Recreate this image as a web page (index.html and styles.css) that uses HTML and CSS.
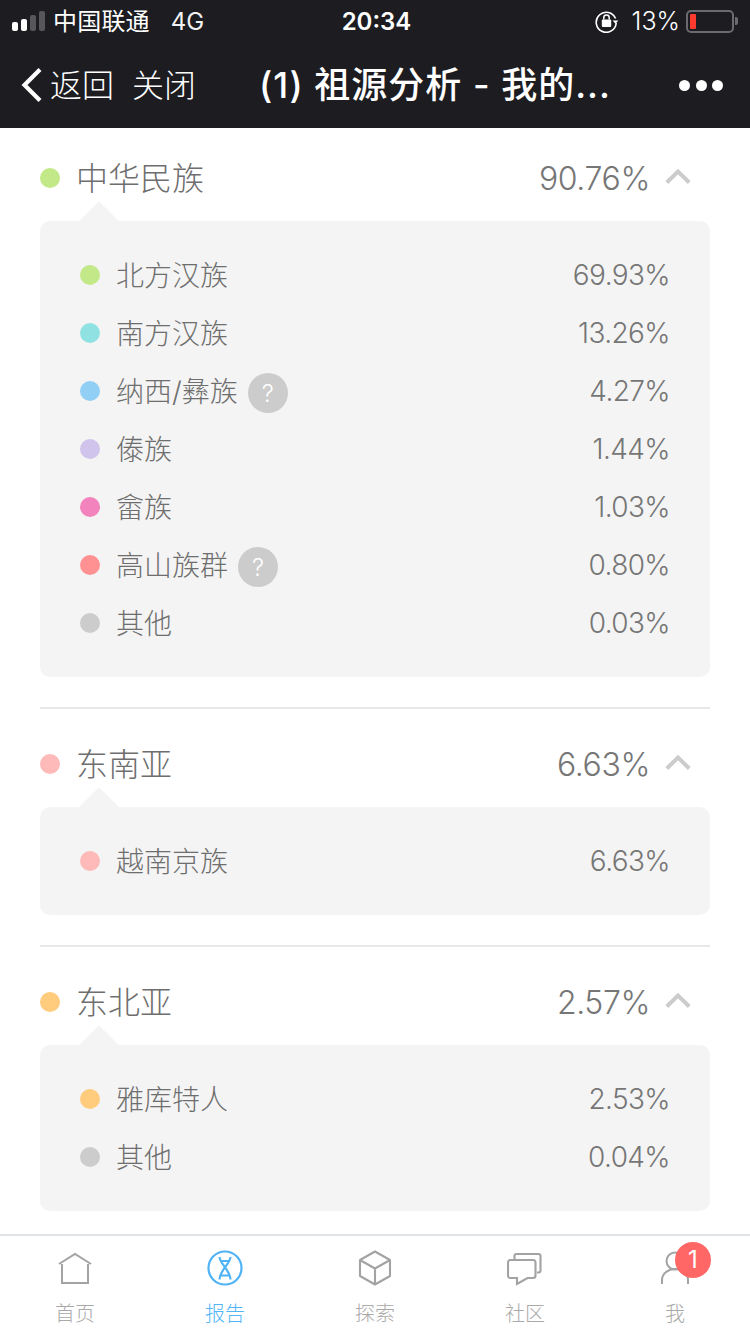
FILE: index.html
```html
<!DOCTYPE html>
<html lang="zh">
<head>
<meta charset="utf-8">
<title>祖源分析</title>
<link rel="stylesheet" href="styles.css">
</head>
<body>
<div class="app">
  <header class="top">
    <div class="status">
      <div class="status-left">
        <div class="signal"><i class="on s1"></i><i class="on s2"></i><i class="s3"></i><i class="s4"></i></div>
        <span class="carrier">中国联通</span>
        <span class="net">4G</span>
      </div>
      <div class="clock">20:34</div>
      <div class="status-right">
        <svg class="lock" viewBox="0 0 24 24" width="24" height="24"><path d="M20.5 9.5A10 10 0 1 0 21.2 14" fill="none" stroke="#fff" stroke-width="1.6"/><path d="M17.6 11.5h5.8l-2.9 3.2z" fill="#fff"/><rect x="6.8" y="10.5" width="9.4" height="7.5" rx="1" fill="#fff"/><path d="M8.8 10.5V8.600a2.700 2.700 0 0 1 5.400 0v1.900" fill="none" stroke="#fff" stroke-width="1.5"/></svg>
        <span class="pct">13%</span>
        <div class="battery"><div class="battery-body"><i class="battery-level"></i></div><i class="battery-tip"></i></div>
      </div>
    </div>
    <nav class="nav">
      <svg class="back" viewBox="0 0 24 36" width="24" height="36"><path d="M20 2.500 4.500 18 20 33.500" fill="none" stroke="#fff" stroke-width="4.200"/></svg>
      <span class="nav-link back-text">返回</span>
      <span class="nav-link close">关闭</span>
      <h1 class="title">(1) 祖源分析 - 我的...</h1>
      <div class="more"><i></i><i></i><i></i></div>
    </nav>
  </header>

  <main class="content">
    <section class="group first">
      <div class="group-head">
        <i class="dot green"></i><span class="group-name">中华民族</span>
        <span class="group-pct">90.76%</span>
        <svg class="chev" viewBox="0 0 26 16" width="26" height="16"><path d="M1.800 14.500 13 3.500l11.200 11" fill="none" stroke="#ccc" stroke-width="4"/></svg>
      </div>
      <div class="panel">
        <div class="row"><i class="dot green"></i><span class="name">北方汉族</span><span class="val">69.93%</span></div>
        <div class="row"><i class="dot teal"></i><span class="name">南方汉族</span><span class="val">13.26%</span></div>
        <div class="row"><i class="dot blue"></i><span class="name">纳西/彝族</span><span class="help">?</span><span class="val">4.27%</span></div>
        <div class="row"><i class="dot lilac"></i><span class="name">傣族</span><span class="val">1.44%</span></div>
        <div class="row"><i class="dot pink"></i><span class="name">畲族</span><span class="val">1.03%</span></div>
        <div class="row"><i class="dot red"></i><span class="name">高山族群</span><span class="help">?</span><span class="val">0.80%</span></div>
        <div class="row"><i class="dot grey"></i><span class="name">其他</span><span class="val">0.03%</span></div>
      </div>
    </section>

    <section class="group">
      <div class="group-head">
        <i class="dot salmon"></i><span class="group-name">东南亚</span>
        <span class="group-pct">6.63%</span>
        <svg class="chev" viewBox="0 0 26 16" width="26" height="16"><path d="M1.800 14.500 13 3.500l11.200 11" fill="none" stroke="#ccc" stroke-width="4"/></svg>
      </div>
      <div class="panel">
        <div class="row"><i class="dot salmon"></i><span class="name">越南京族</span><span class="val">6.63%</span></div>
      </div>
    </section>

    <section class="group">
      <div class="group-head">
        <i class="dot orange"></i><span class="group-name">东北亚</span>
        <span class="group-pct">2.57%</span>
        <svg class="chev" viewBox="0 0 26 16" width="26" height="16"><path d="M1.800 14.500 13 3.500l11.200 11" fill="none" stroke="#ccc" stroke-width="4"/></svg>
      </div>
      <div class="panel">
        <div class="row"><i class="dot orange"></i><span class="name">雅库特人</span><span class="val">2.53%</span></div>
        <div class="row"><i class="dot grey"></i><span class="name">其他</span><span class="val">0.04%</span></div>
      </div>
    </section>
  </main>

  <footer class="tabs">
    <div class="tab">
      <svg viewBox="0 0 36 36" width="36" height="36"><path d="M2 14 18 4l16 10" fill="none" stroke="#a3a3a3" stroke-width="2"/><path d="M5 14v19h26V14" fill="none" stroke="#a3a3a3" stroke-width="2"/></svg>
      <span>首页</span>
    </div>
    <div class="tab active">
      <svg viewBox="0 0 36 36" width="36" height="36"><circle cx="18" cy="18" r="16.500" fill="none" stroke="#4fb3f6" stroke-width="2.200"/><path d="M12.500 7C13 14 23 20 23.500 29.500M23.500 7C23 14 13 20 12.500 29.500M13 11h10M13 25.500h10" fill="none" stroke="#4fb3f6" stroke-width="2.200"/></svg>
      <span>报告</span>
    </div>
    <div class="tab">
      <svg viewBox="0 0 36 36" width="36" height="36"><path d="M18 1.500 33 10v16l-15 8.500L3 26V10zM3 10l15 8.500L33 10M18 18.500v16" fill="none" stroke="#a3a3a3" stroke-width="2.100" stroke-linejoin="round"/></svg>
      <span>探索</span>
    </div>
    <div class="tab">
      <svg viewBox="0 0 36 36" width="36" height="36"><path d="M7.500 10V6q0-2 2-2h22q2 0 2 2v14.500q0 2-2 2H30" fill="none" stroke="#a3a3a3" stroke-width="2.100"/><path d="M3.500 10H26q2.500 0 2.500 2.500v13Q28.500 28 26 28h-5.500L10 34V28H3.500Q1 28 1 25.500v-13Q1 10 3.500 10z" fill="none" stroke="#a3a3a3" stroke-width="2.100"/></svg>
      <span>社区</span>
    </div>
    <div class="tab">
      <svg viewBox="0 0 36 36" width="36" height="36"><circle cx="18" cy="11" r="8.500" fill="none" stroke="#a3a3a3" stroke-width="2"/><path d="M5 34v-4a13 11 0 0 1 26 0v4" fill="none" stroke="#a3a3a3" stroke-width="2"/></svg>
      <span>我</span>
      <b class="badge">1</b>
    </div>
  </footer>
</div>
</body>
</html>
```

FILE: styles.css
```css
* { box-sizing: border-box; }
html, body { margin: 0; padding: 0; }
body { width: 750px; height: 1334px; overflow: hidden; background: #fff; font-family: Inter, "Noto Sans CJK SC", sans-serif; }
i { display: block; }
.app { width: 750px; height: 1334px; display: flex; flex-direction: column; }

.top { height: 128px; background: #1c1c21; color: #fff; flex: none; }
.status { height: 42px; display: flex; align-items: center; justify-content: space-between; padding: 0 12px; font-size: 24px; }
.status-left { display: flex; align-items: center; width: 220px; }
.signal { display: flex; align-items: flex-end; gap: 3px; margin-right: 8px; height: 20px; }
.signal i { width: 6px; background: #57575a; border-radius: 2px; }
.signal .on { background: #fff; }
.s1 { height: 9px; } .s2 { height: 12px; } .s3 { height: 16px; } .s4 { height: 20px; }
.carrier { font-family: "Noto Sans CJK SC", sans-serif; font-weight: 400; font-size: 24px; line-height: 28px; margin-bottom: 2px; letter-spacing: .2px; }
.net { margin-left: 21px; font-family: Inter, sans-serif; font-size: 24px; font-weight: 400; color: #f2f2f2; }
.clock { font-size: 24px; font-weight: 600; width: 100px; text-align: center; margin-left: 3px; }
.status-right { display: flex; align-items: center; width: 220px; justify-content: flex-end; }
.lock { margin-right: 13px; }
.pct { font-size: 25px; font-weight: 300; margin-right: 6px; }
.battery { display: flex; align-items: center; }
.battery-body { width: 48px; height: 23px; border: 2px solid #6b6b6f; border-radius: 5px; padding: 2px; }
.battery-level { width: 6px; height: 15px; background: #ff3b30; border-radius: 1px; }
.battery-tip { width: 3px; height: 8px; background: #6b6b6f; margin-left: 1px; border-radius: 0 2px 2px 0; }

.nav { height: 86px; display: flex; align-items: center; padding-left: 20px; }
.back { flex: none; }
.nav-link { font-family: "Noto Sans CJK SC", sans-serif; font-size: 32px; font-weight: 300; color: #fff; margin-bottom: 5px; }
.back-text { margin-left: 6px; }
.close { margin-left: 18px; }
.title { margin: 0 0 0 63px; width: 356px; flex: none; font-size: 36px; letter-spacing: 1px; line-height: 44px; font-weight: 500; white-space: nowrap; font-family: Inter, "Noto Sans CJK SC", sans-serif; }
.more { display: flex; gap: 5.5px; margin-left: 64px; }
.more i { width: 11px; height: 11px; border-radius: 50%; background: #fff; }

.content { flex: 1; padding: 0 40px; overflow: hidden; color: #6e6e6e; }
.group { border-top: 2px solid #e8e8e8; margin-top: 30px; padding-top: 12px; }
.group.first { border-top: 0; margin-top: 0; padding-top: 7px; }
.group-head { height: 86px; display: flex; align-items: center; position: relative; }
.group-head::after { content: ""; position: absolute; left: 45px; bottom: -14px; width: 28px; height: 28px; background: #f4f4f4; transform: rotate(45deg); border-radius: 1px; }
.group-head .dot { margin-right: 17px; }
.group-name { font-family: "Noto Sans CJK SC", sans-serif; font-size: 32px; font-weight: 300; line-height: 44px; margin-bottom: 4px; margin-left: -1px; }
.group-pct { margin-left: auto; font-size: 32px; font-weight: 300; color: #767676; letter-spacing: -.4px; }
.chev { margin-left: 15px; margin-right: 19px; margin-top: -5px; }

.dot { width: 20px; height: 20px; border-radius: 50%; flex: none; }
.green { background: #c3e888; } .teal { background: #90e1e1; } .blue { background: #92cff5; } .lilac { background: #d1c4ec; }
.pink { background: #f283bd; } .red { background: #ff9193; } .grey { background: #cccccc; } .salmon { background: #fdbab8; } .orange { background: #ffcb7c; }

.panel { background: #f4f4f4; border-radius: 10px; padding: 25px 40px; position: relative; }
.row { height: 58px; display: flex; align-items: center; }
.row .dot { margin-right: 16px; }
.name { font-family: Inter, "Noto Sans CJK SC", sans-serif; font-size: 28px; font-weight: 300; line-height: 40px; margin-top: 2px; }
.val { margin-left: auto; font-size: 28px; font-weight: 300; color: #767676; letter-spacing: -.6px; }
.help { width: 40px; height: 40px; border-radius: 50%; background: #ccc; color: #fff; margin: 4px 0 0 10px; font-size: 24px; font-weight: 300; display: flex; align-items: center; justify-content: center; }

.tabs { height: 100px; flex: none; border-top: 2px solid #e1e4e7; background: #fff; display: flex; }
.tab { flex: 1; display: flex; flex-direction: column; align-items: center; position: relative; padding-top: 14px; color: #a9a9a9; font-family: "Noto Sans CJK SC", sans-serif; font-weight: 300; font-size: 20px; line-height: 28px; }
.tab svg { margin-bottom: 13px; display: block; }
.tab.active { color: #52b5f7; }
.badge { position: absolute; left: 75px; top: 6px; width: 36px; height: 36px; border-radius: 50%; background: #ff6766; color: #fff; font-family: Inter, sans-serif; font-weight: 400; font-size: 24px; line-height: 36px; text-align: center; }
```
